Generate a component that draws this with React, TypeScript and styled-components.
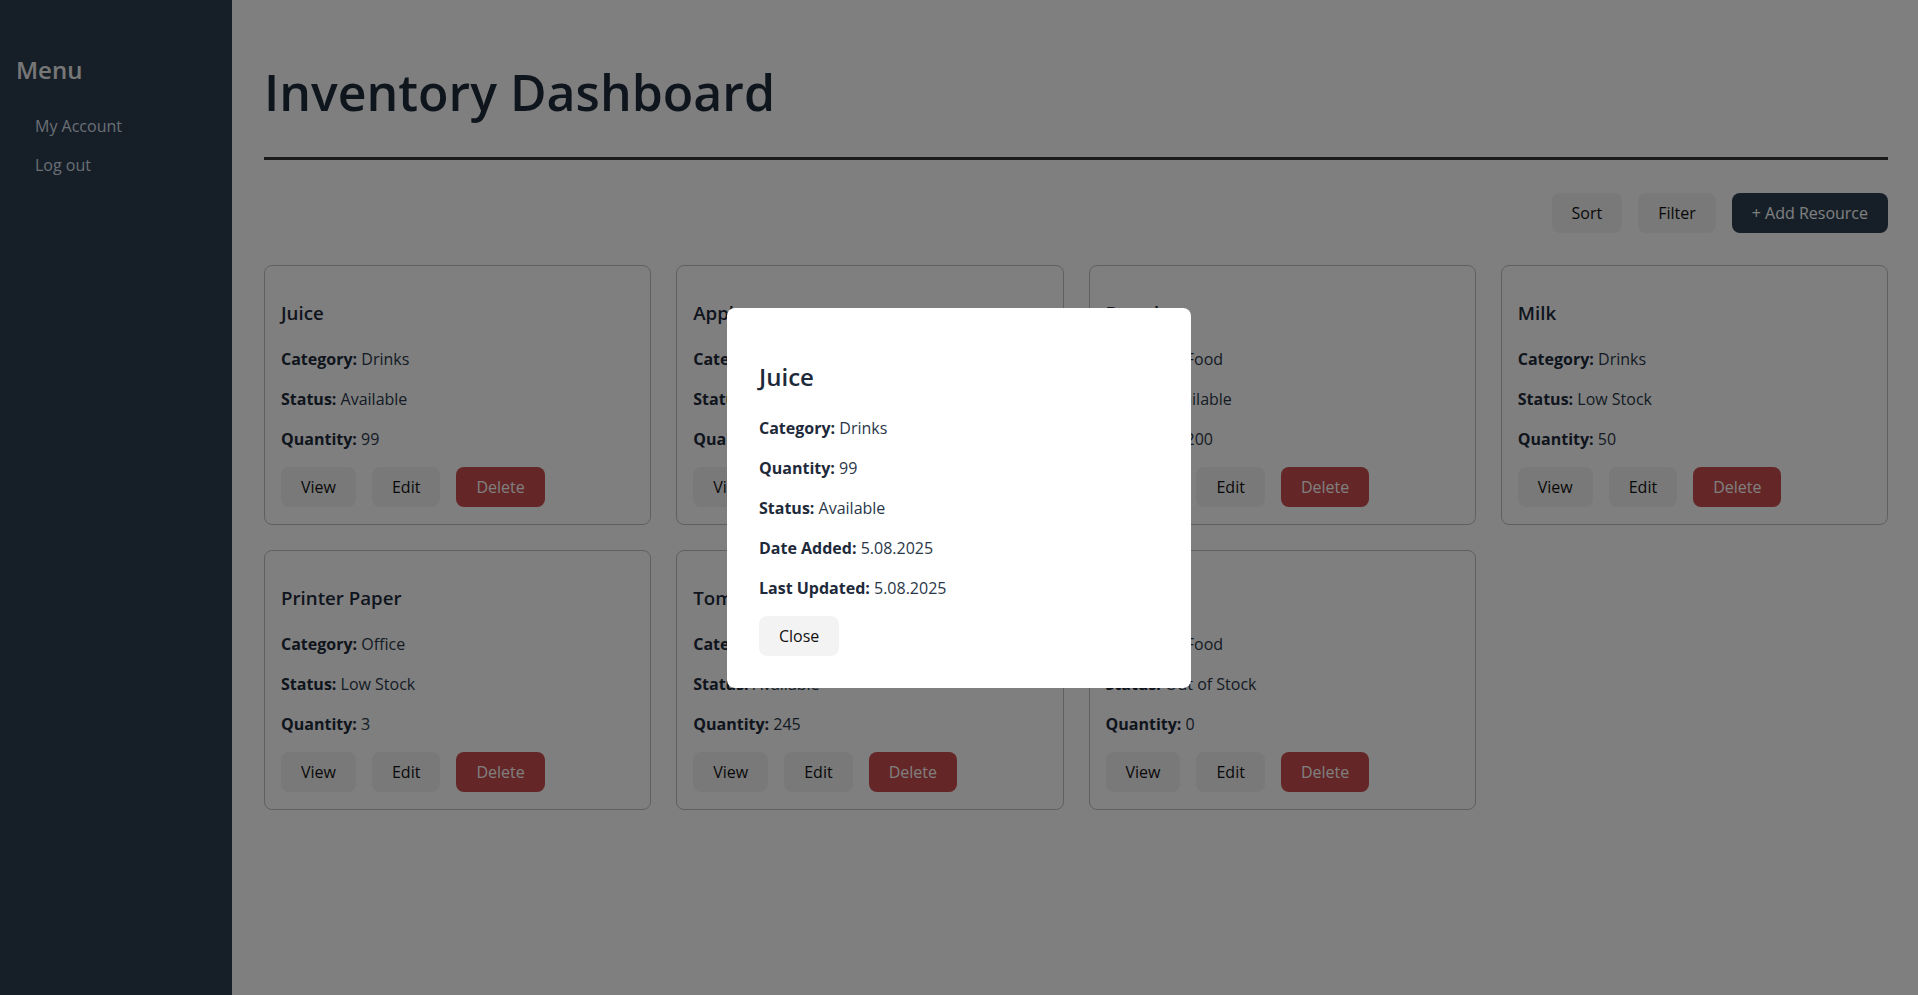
import React, { useState } from "react";
import styled, { createGlobalStyle } from "styled-components";

const GlobalStyle = createGlobalStyle`
  body {
    margin: 0;
    font-family: "Open Sans", "Noto Sans", sans-serif;
    line-height: 1.5;
    color: #1e293b;
    background: #fff;
  }
`;

type Resource = {
  id: number;
  name: string;
  category: string;
  status: string;
  quantity: number;
  dateAdded: string;
  lastUpdated: string;
};

const resources: Resource[] = [
  { id: 1, name: "Juice", category: "Drinks", status: "Available", quantity: 99, dateAdded: "5.08.2025", lastUpdated: "5.08.2025" },
  { id: 2, name: "Apples", category: "Food", status: "Available", quantity: 120, dateAdded: "5.08.2025", lastUpdated: "5.08.2025" },
  { id: 3, name: "Bread", category: "Food", status: "Available", quantity: 200, dateAdded: "5.08.2025", lastUpdated: "5.08.2025" },
  { id: 4, name: "Milk", category: "Drinks", status: "Low Stock", quantity: 50, dateAdded: "5.08.2025", lastUpdated: "5.08.2025" },
  { id: 5, name: "Printer Paper", category: "Office", status: "Low Stock", quantity: 3, dateAdded: "5.08.2025", lastUpdated: "5.08.2025" },
  { id: 6, name: "Tomatoes", category: "Food", status: "Available", quantity: 245, dateAdded: "5.08.2025", lastUpdated: "5.08.2025" },
  { id: 7, name: "Rice", category: "Food", status: "Out of Stock", quantity: 0, dateAdded: "5.08.2025", lastUpdated: "5.08.2025" }
];

const Layout = styled.div`
  display: flex;
  min-height: 100vh;
`;

const Sidebar = styled.aside`
  width: 232px;
  flex-shrink: 0;
  background: #2c3e50;
  padding: 52px 16px;
  box-sizing: border-box;
`;

const MenuTitle = styled.h2`
  margin: 0 0 25px;
  font-size: 24px;
  font-weight: 600;
  color: #eeeeee;
  line-height: 1.5;
`;

const MenuList = styled.ul`
  list-style: none;
  margin: 0;
  padding: 0 0 0 19px;
  display: flex;
  flex-direction: column;
  gap: 12px;
`;

const MenuLink = styled.li`
  font-size: 16px;
  line-height: 27px;
  color: #d5dde6;
  cursor: pointer;
`;

const Main = styled.main`
  flex: 1;
  padding: 32px 30px 32px 32px;
`;

const Header = styled.header`
  border-bottom: 3px solid #333;
  padding: 33px 0 37px;
`;

const Title = styled.h1`
  margin: 0;
  font-size: 50px;
  font-weight: 600;
  line-height: 1.1;
  color: #1e2a3a;
`;

const Toolbar = styled.div`
  display: flex;
  justify-content: flex-end;
  gap: 16px;
  margin: 33px 0 32px;
`;

const Button = styled.button<{ $variant?: "default" | "primary" | "danger" }>`
  font-family: inherit;
  font-size: 16px;
  font-weight: 500;
  line-height: 24px;
  padding: 8px 20px;
  border: none;
  border-radius: 8px;
  cursor: pointer;
  background: ${p =>
    p.$variant === "primary" ? "#2c3e50" : p.$variant === "danger" ? "#c94c4c" : "#f3f3f3"};
  color: ${p => (p.$variant === "primary" || p.$variant === "danger" ? "#fff" : "#111")};
`;

const Grid = styled.div`
  display: grid;
  grid-template-columns: repeat(4, 1fr);
  gap: 25px;
`;

const Card = styled.div`
  border: 1px solid #c0c0c0;
  border-radius: 8px;
  padding: 16px 16px 17px;
`;

const CardTitle = styled.h3`
  margin: 17px 0 20px;
  font-size: 18.7px;
  font-weight: 600;
  color: #1e2a3a;
`;

const Field = styled.p`
  margin: 16px 0;
  font-size: 16px;
  color: #2a3748;

  strong {
    font-weight: 700;
    color: #1e2a3a;
  }
`;

const Actions = styled.div`
  display: flex;
  gap: 16px;
`;

const Overlay = styled.div`
  position: fixed;
  inset: 0;
  background: rgba(0, 0, 0, 0.5);
  display: flex;
  align-items: center;
  justify-content: center;
`;

const Modal = styled.div`
  width: 400px;
  padding: 32px;
  background: #fff;
  border-radius: 8px;
`;

const ModalTitle = styled.h2`
  margin: 19px 0 21px;
  font-size: 24px;
  font-weight: 600;
  line-height: 1.5;
  color: #1e2a3a;
`;

const App: React.FC = () => {
  const [selected, setSelected] = useState<Resource | null>(resources[0]);

  return (
    <Layout>
      <GlobalStyle />
      <Sidebar>
        <MenuTitle>Menu</MenuTitle>
        <MenuList>
          <MenuLink>My Account</MenuLink>
          <MenuLink>Log out</MenuLink>
        </MenuList>
      </Sidebar>

      <Main>
        <Header>
          <Title>Inventory Dashboard</Title>
        </Header>

        <Toolbar>
          <Button>Sort</Button>
          <Button>Filter</Button>
          <Button $variant="primary">+ Add Resource</Button>
        </Toolbar>

        <Grid>
          {resources.map(r => (
            <Card key={r.id}>
              <CardTitle>{r.name}</CardTitle>
              <Field>
                <strong>Category:</strong> {r.category}
              </Field>
              <Field>
                <strong>Status:</strong> {r.status}
              </Field>
              <Field>
                <strong>Quantity:</strong> {r.quantity}
              </Field>
              <Actions>
                <Button onClick={() => setSelected(r)}>View</Button>
                <Button>Edit</Button>
                <Button $variant="danger">Delete</Button>
              </Actions>
            </Card>
          ))}
        </Grid>
      </Main>

      {selected && (
        <Overlay onClick={() => setSelected(null)}>
          <Modal onClick={e => e.stopPropagation()}>
            <ModalTitle>{selected.name}</ModalTitle>
            <Field>
              <strong>Category:</strong> {selected.category}
            </Field>
            <Field>
              <strong>Quantity:</strong> {selected.quantity}
            </Field>
            <Field>
              <strong>Status:</strong> {selected.status}
            </Field>
            <Field>
              <strong>Date Added:</strong> {selected.dateAdded}
            </Field>
            <Field>
              <strong>Last Updated:</strong> {selected.lastUpdated}
            </Field>
            <Button onClick={() => setSelected(null)}>Close</Button>
          </Modal>
        </Overlay>
      )}
    </Layout>
  );
};

export default App;
